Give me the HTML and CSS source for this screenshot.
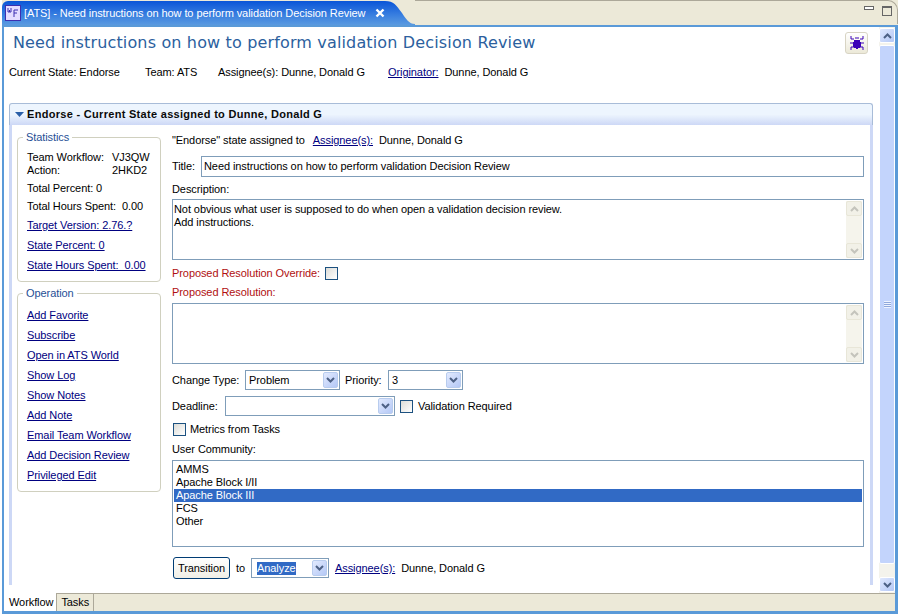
FILE: index.html
```html
<!DOCTYPE html>
<html lang="en">
<head>
	<meta charset="UTF-8">
	<title>[ATS] - Need instructions on how to perform validation Decision Review</title>
	<link rel="stylesheet" href="styles.css">
</head>
<body>
	<div class="window">
		<div class="tabbar">
			<div class="tab">
				<svg class="wf-icon" width="16" height="16" viewBox="0 0 16 16">
					<rect x="0.5" y="0.5" width="15" height="15" fill="#e4dcff" stroke="#3c2fb0"/>
					<path d="M3 3v4h1.500v-2M4.500 7h1.500v-4M9 5v7M9 5h4M9 8h3" fill="none" stroke="#3c2fb0"/>
				</svg>
				<span class="tab-title">[ATS] - Need instructions on how to perform validation Decision Review</span>
				<svg class="tab-close" width="10" height="10" viewBox="0 0 10 10">
					<path d="M1.500 1.500l7 7M8.500 1.500l-7 7" stroke="#fff" stroke-width="2.400"/>
				</svg>
			</div>
			<svg class="tab-curve" width="30" height="24" viewBox="0 0 30 24">
				<defs>
					<linearGradient id="tabfill" x1="0" y1="0" x2="0" y2="1">
						<stop offset="0" stop-color="#0a55d8"/>
						<stop offset="0.6" stop-color="#3a80e0"/>
						<stop offset="1" stop-color="#5a9ae0"/>
					</linearGradient>
				</defs>
				<path d="M0 0C9 0 11 4 17 12C21 18 24 23 30 23V24H0Z" fill="url(#tabfill)"/>
			</svg>
			<div class="tab-rest">
				<span class="min-btn"></span>
				<span class="max-btn"></span>
			</div>
		</div>
		<div class="frame">
			<div class="editor">
				<div class="content">
					<div class="head">
						<h1>Need instructions on how to perform validation Decision Review</h1>
						<button class="bug-btn">
							<svg width="16" height="16" viewBox="0 0 16 16">
								<path d="M5 5h6v2h1v5h-1v1H9v1H7v-1H5v-1H4V7h1z" fill="#3a00b8"/>
								<path d="M2 1v3h3M14 1v3h-3M1 8h3M15 8h-3M2 15v-3h3M14 15v-3h-3M6 3h4" fill="none" stroke="#3a00b8"/>
							</svg>
						</button>
					</div>
					<div class="info">
						<span class="info-state">Current State: Endorse</span>
						<span class="info-team">Team: ATS</span>
						<span class="info-assignee">Assignee(s): Dunne, Donald G</span>
						<span><a href="#">Originator:</a>&nbsp; Dunne, Donald G</span>
					</div>
					<div class="section">
						<div class="section-head">
							<svg width="9" height="5" viewBox="0 0 9 5"><path d="M0 0h9L4.500 5z" fill="#2a5fa8"/></svg>
							<b>Endorse - Current State assigned to Dunne, Donald G</b>
						</div>
						<div class="section-body">
							<div class="side">
								<div class="group group-stats">
									<span class="group-title">Statistics</span>
									<div class="pair"><span>Team Workflow:</span><span>VJ3QW</span></div>
									<div class="pair"><span>Action:</span><span>2HKD2</span></div>
									<p class="stat">Total Percent: 0</p>
									<p class="stat">Total Hours Spent:&nbsp; 0.00</p>
									<p class="stat-link"><a href="#">Target Version: 2.76.?</a></p>
									<p class="stat-link"><a href="#">State Percent: 0</a></p>
									<p class="stat-link"><a href="#">State Hours Spent:&nbsp; 0.00</a></p>
								</div>
								<div class="group group-ops">
									<span class="group-title">Operation</span>
									<a href="#">Add Favorite</a>
									<a href="#">Subscribe</a>
									<a href="#">Open in ATS World</a>
									<a href="#">Show Log</a>
									<a href="#">Show Notes</a>
									<a href="#">Add Note</a>
									<a href="#">Email Team Workflow</a>
									<a href="#">Add Decision Review</a>
									<a href="#">Privileged Edit</a>
								</div>
							</div>
							<div class="main">
								<div class="row row-state">"Endorse" state assigned to <a href="#">Assignee(s):</a>&nbsp; Dunne, Donald G</div>
								<div class="row row-title">
									<label>Title:</label>
									<div class="input">Need instructions on how to perform validation Decision Review</div>
								</div>
								<div class="label label-desc">Description:</div>
								<div class="textarea">
									<div class="textarea-text">Not obvious what user is supposed to do when open a validation decision review.<br>Add instructions.</div>
									<div class="dis-scroll">
										<span class="dis-btn"><svg width="9" height="6" viewBox="0 0 9 6"><path d="M1 5l3.500-3.500L8 5" fill="none" stroke="#c4c4bc" stroke-width="2"/></svg></span>
										<span class="dis-btn"><svg width="9" height="6" viewBox="0 0 9 6"><path d="M1 1l3.500 3.500L8 1" fill="none" stroke="#c4c4bc" stroke-width="2"/></svg></span>
									</div>
								</div>
								<div class="row row-override">
									<span class="red">Proposed Resolution Override:</span>
									<span class="check"></span>
								</div>
								<div class="label red label-res">Proposed Resolution:</div>
								<div class="textarea">
									<div class="textarea-text"></div>
									<div class="dis-scroll">
										<span class="dis-btn"><svg width="9" height="6" viewBox="0 0 9 6"><path d="M1 5l3.500-3.500L8 5" fill="none" stroke="#c4c4bc" stroke-width="2"/></svg></span>
										<span class="dis-btn"><svg width="9" height="6" viewBox="0 0 9 6"><path d="M1 1l3.500 3.500L8 1" fill="none" stroke="#c4c4bc" stroke-width="2"/></svg></span>
									</div>
								</div>
								<div class="row row-change">
									<label class="label-type">Change Type:</label>
									<div class="combo combo-type"><span>Problem</span><i class="arrow"><svg width="9" height="6" viewBox="0 0 9 6"><path d="M1 1l3.500 3.500L8 1" fill="none" stroke="#4d6185" stroke-width="2"/></svg></i></div>
									<label class="label-prio">Priority:</label>
									<div class="combo combo-prio"><span>3</span><i class="arrow"><svg width="9" height="6" viewBox="0 0 9 6"><path d="M1 1l3.500 3.500L8 1" fill="none" stroke="#4d6185" stroke-width="2"/></svg></i></div>
								</div>
								<div class="row row-deadline">
									<label>Deadline:</label>
									<div class="combo combo-date"><span></span><i class="arrow"><svg width="9" height="6" viewBox="0 0 9 6"><path d="M1 1l3.500 3.500L8 1" fill="none" stroke="#4d6185" stroke-width="2"/></svg></i></div>
									<span class="check"></span>
									<span>Validation Required</span>
								</div>
								<div class="row row-metrics">
									<span class="check"></span>
									<span>Metrics from Tasks</span>
								</div>
								<div class="label label-community">User Community:</div>
								<div class="listbox">
									<div>AMMS</div>
									<div>Apache Block I/II</div>
									<div class="selected">Apache Block III</div>
									<div>FCS</div>
									<div>Other</div>
								</div>
								<div class="row row-transition">
									<button class="btn">Transition</button>
									<span>to</span>
									<div class="combo combo-next"><span class="sel-text">Analyze</span><i class="arrow"><svg width="9" height="6" viewBox="0 0 9 6"><path d="M1 1l3.500 3.500L8 1" fill="none" stroke="#4d6185" stroke-width="2"/></svg></i></div>
									<span><a href="#">Assignee(s):</a>&nbsp; Dunne, Donald G</span>
								</div>
							</div>
						</div>
					</div>
				</div>
				<div class="scrollbar">
					<span class="sb-btn"><svg width="9" height="6" viewBox="0 0 9 6"><path d="M1 5l3.500-3.500L8 5" fill="none" stroke="#4d6185" stroke-width="2"/></svg></span>
					<div class="sb-thumb"><span class="grip"></span></div>
					<span class="sb-btn"><svg width="9" height="6" viewBox="0 0 9 6"><path d="M1 1l3.500 3.500L8 1" fill="none" stroke="#4d6185" stroke-width="2"/></svg></span>
				</div>
			</div>
			<div class="pages">
				<span class="page page-on">Workflow</span>
				<span class="page">Tasks</span>
			</div>
		</div>
	</div>
</body>
</html>
```

FILE: styles.css
```css
* {
	margin: 0;
	padding: 0;
	box-sizing: border-box;
}
html, body {
	height: 100%;
	overflow: hidden;
}
body {
	background-color: #fff;
	color: #000;
	font-family: "Liberation Sans", sans-serif;
	font-size: 11px;
	letter-spacing: -0.08px;
	line-height: 13px;
}
a {
	color: #000080;
	text-decoration: underline;
}
button {
	font: inherit;
	letter-spacing: inherit;
}
.window {
	width: 900px;
	height: 614px;
	padding: 0 2px 0 2px;
	background-color: #fff;
	display: flex;
	flex-direction: column;
}
.tabbar {
	height: 25px;
	display: flex;
	flex-shrink: 0;
	padding-top: 1px;
	background-color: #ece9d8;
}
.tab {
	width: 383px;
	height: 24px;
	display: flex;
	align-items: center;
	padding-left: 3px;
	color: #fff;
	background: linear-gradient(#0a55d8, #3a80e0 60%, #5a9ae0);
	border-radius: 6px 0 0 0;
}
.wf-icon {
	flex-shrink: 0;
	margin-right: 3px;
}
.tab-title {
	white-space: nowrap;
	width: 351px;
}
.tab-close {
	flex-shrink: 0;
}
.tab-curve {
	flex-shrink: 0;
	display: block;
}
.tab-rest {
	flex: 1;
	height: 24px;
	border-top: 1px solid #aca899;
	border-radius: 0 10px 0 0;
	border-right: 1px solid #aca899;
	display: flex;
	justify-content: flex-end;
	padding: 5px 5px 0 0;
	gap: 8px;
	margin-top: -1px;
}
.min-btn {
	width: 10px;
	height: 4px;
	border: 1px solid #666;
	background-color: #fff;
}
.max-btn {
	width: 10px;
	height: 10px;
	border: 1px solid #666;
	border-top-width: 2px;
	background-color: #ece9d8;
}
.frame {
	flex: 1;
	min-height: 0;
	display: flex;
	flex-direction: column;
	border: 2px solid #5a9ad8;
	border-right-width: 3px;
	border-bottom-width: 3px;
}
.editor {
	flex: 1;
	min-height: 0;
	display: flex;
}
.content {
	flex: 1;
	min-width: 0;
	padding: 0 6px 0 5px;
}
.head {
	height: 38px;
	display: flex;
	justify-content: space-between;
	padding: 6px 5px 0 4px;
}
h1 {
	font-family: "DejaVu Sans", sans-serif;
	font-size: 16px;
	font-weight: normal;
	letter-spacing: 0.15px;
	line-height: 20px;
	color: #2c5f9e;
}
.bug-btn {
	width: 23px;
	height: 22px;
	margin-top: -1px;
	border: 1px solid #d8d4c4;
	border-radius: 3px;
	background: linear-gradient(#fff, #ece9d8);
	display: flex;
	align-items: center;
	justify-content: center;
}
.info {
	height: 38px;
	display: flex;
	white-space: nowrap;
	padding-top: 1px;
}
.info-state {
	width: 136px;
}
.info-team {
	width: 73px;
}
.info-assignee {
	width: 170px;
}
.section-head {
	height: 22px;
	display: flex;
	align-items: center;
	gap: 3px;
	padding-left: 5px;
	border: 1px solid #a8bcd8;
	border-bottom: none;
	border-radius: 3px 3px 0 0;
	background: linear-gradient(#edf5fe 50%, #cdd8f6);
}
.section-head b {
	font-weight: bold;
	letter-spacing: 0.3px;
	color: #0a0a0a;
}
.section-body {
	display: flex;
	height: 460px;
	border-left: 3px solid #cdd8f6;
	border-right: 3px solid #cdd8f6;
	padding-left: 5px;
}
.side {
	width: 155px;
	flex-shrink: 0;
	padding-top: 12px;
}
.group {
	position: relative;
	width: 144px;
	border: 1px solid #d0d0bf;
	border-radius: 4px;
	padding-left: 9px;
}
.group-title {
	position: absolute;
	top: -7px;
	left: 5px;
	padding: 0 3px;
	background-color: #fff;
	color: #1f4f96;
}
.group-stats {
	height: 145px;
	padding-top: 13px;
}
.pair {
	display: flex;
}
.pair span:first-child {
	width: 85px;
}
.stat {
	margin-top: 5px;
}
.stat-link {
	margin-top: 6px;
	height: 14px;
}
.group-ops {
	height: 199px;
	margin-top: 11px;
	padding-top: 15px;
	display: flex;
	flex-direction: column;
	align-items: flex-start;
	gap: 7px;
}
.main {
	flex: 1;
	min-width: 0;
	padding-right: 6px;
}
.row {
	display: flex;
	align-items: center;
	white-space: nowrap;
}
.row-state {
	display: block;
	padding-top: 9px;
	height: 31px;
}
.row-state a {
	margin-left: 5px;
}
.row-title {
	height: 21px;
}
.row-title label {
	width: 29px;
}
.input {
	flex: 1;
	height: 21px;
	line-height: 19px;
	padding-left: 2px;
	border: 1px solid #7f9db9;
}
.label {
	height: 13px;
}
.label-desc {
	margin-top: 6px;
	margin-bottom: 3px;
}
.textarea {
	height: 61px;
	display: flex;
	border: 1px solid #7f9db9;
}
.textarea-text {
	flex: 1;
	padding: 3px 1px;
}
.dis-scroll {
	width: 16px;
	margin: 1px;
	background-color: #f5f4ec;
	display: flex;
	flex-direction: column;
	justify-content: space-between;
}
.dis-btn {
	height: 15px;
	border: 1px solid #e8e6d8;
	border-radius: 2px;
	background-color: #f2f1e8;
	display: flex;
	align-items: center;
	justify-content: center;
}
.row-override {
	height: 26px;
	gap: 5px;
}
.red {
	color: #b01010;
}
.check {
	width: 13px;
	height: 13px;
	flex-shrink: 0;
	border: 1px solid #1c5180;
	background: linear-gradient(135deg, #dcdcd7, #fff);
}
.label-res {
	margin-bottom: 4px;
}
.row-change {
	margin-top: 6px;
	height: 20px;
}
.label-type {
	width: 73px;
}
.label-prio {
	width: 43px;
	margin-left: 5px;
}
.combo {
	height: 20px;
	display: flex;
	align-items: center;
	justify-content: space-between;
	padding: 1px 1px 1px 3px;
	border: 1px solid #7f9db9;
}
.arrow {
	width: 15px;
	height: 16px;
	border: 1px solid #b8ccee;
	border-radius: 2px;
	background: linear-gradient(135deg, #e2eafe, #b4c8f6);
	display: flex;
	align-items: center;
	justify-content: center;
}
.combo-type {
	width: 95px;
}
.combo-prio {
	width: 75px;
}
.row-deadline {
	margin-top: 6px;
	height: 20px;
}
.row-deadline label {
	width: 53px;
}
.combo-date {
	width: 170px;
	margin-right: 5px;
}
.row-deadline .check {
	margin-right: 5px;
}
.row-metrics {
	margin-top: 6px;
	height: 14px;
	gap: 4px;
	padding-left: 1px;
}
.label-community {
	margin-top: 7px;
	margin-bottom: 4px;
}
.listbox {
	height: 87px;
	padding: 2px 1px;
	border: 1px solid #7f9db9;
}
.listbox div {
	height: 13px;
	padding-left: 2px;
}
.listbox .selected {
	background-color: #316ac5;
	color: #fff;
}
.row-transition {
	margin-top: 10px;
	height: 22px;
}
.btn {
	width: 57px;
	height: 22px;
	margin-left: 1px;
	margin-right: 6px;
	border: 1px solid #003c74;
	border-radius: 3px;
	background: linear-gradient(#fff, #f0efe6);
}
.combo-next {
	width: 78px;
	margin: 0 6px 0 6px;
}
.sel-text {
	background-color: #316ac5;
	color: #fff;
	margin-left: 2px;
}
.scrollbar {
	width: 16px;
	flex-shrink: 0;
	padding: 1px 0;
	display: flex;
	flex-direction: column;
	background-color: #f4f3ec;
}
.sb-btn {
	height: 15px;
	flex-shrink: 0;
	border: 1px solid #fff;
	border-radius: 2px;
	background: linear-gradient(135deg, #dfe8fe, #b4c8f6);
	display: flex;
	align-items: center;
	justify-content: center;
}
.sb-thumb {
	height: 520px;
	margin: 2px 0 13px;
	border: 1px solid #fff;
	border-radius: 2px;
	background-color: #c3d4fc;
	display: flex;
	align-items: center;
	justify-content: center;
}
.grip {
	width: 7px;
	height: 7px;
	background: repeating-linear-gradient(#eef3ff 0 1px, #8fa8dc 1px 2px);
}
.pages {
	height: 18px;
	flex-shrink: 0;
	display: flex;
	background-color: #ece9d8;
	border-top: 1px solid #aca899;
}
.page {
	padding: 2px 4px 0 4px;
	border-right: 1px solid #aca899;
}
.page-on {
	background-color: #fff;
	margin-top: -1px;
	padding: 3px 3px 0 5px;
}
```
